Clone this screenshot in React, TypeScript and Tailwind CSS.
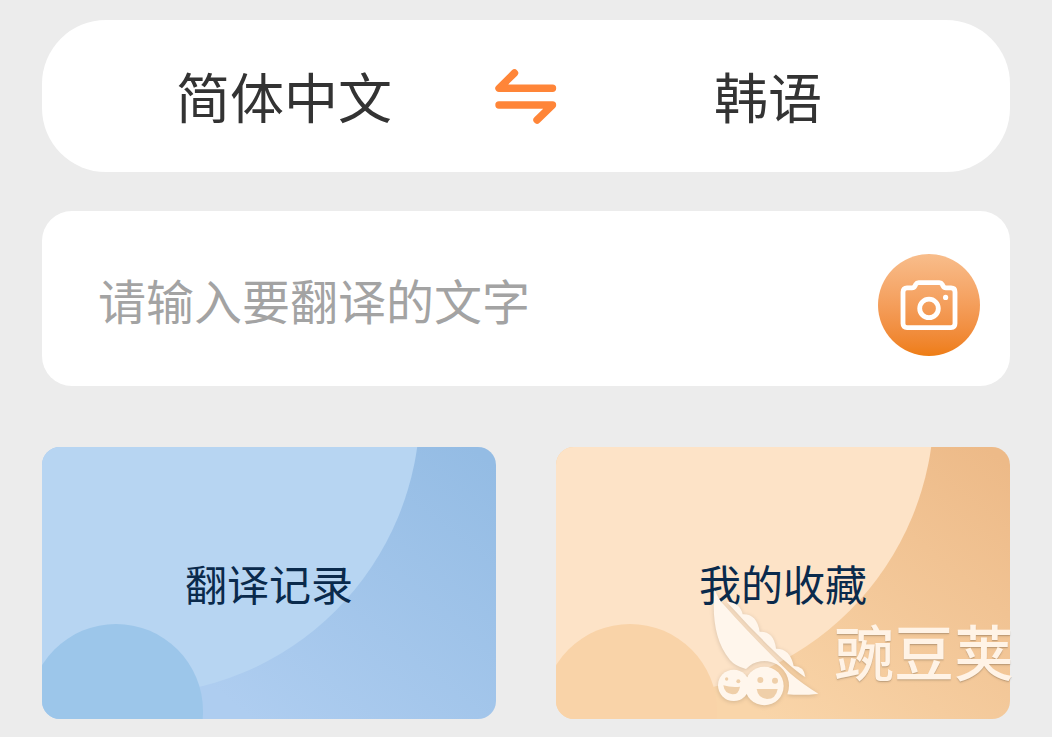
import { useState } from "react";

interface CardArtProps {
  id: string;
  from: string;
  to: string;
  big: string;
  small: string;
}

interface ShortcutCardProps extends CardArtProps {
  label: string;
}

function SwapIcon() {
  return (
    <svg
      viewBox="0 0 62 56"
      className="w-[62px] h-14"
      fill="none"
      stroke="#ff8538"
      strokeWidth="7.4"
      strokeLinecap="round"
      strokeLinejoin="round"
      aria-hidden="true"
    >
      <path d="M19.5 5 L4 20.3 H57.5" />
      <path d="M4 37 H57.5 L42 52" />
    </svg>
  );
}

function CameraIcon() {
  return (
    <svg
      viewBox="0 0 58 52"
      className="w-[58px] h-[52px]"
      fill="none"
      stroke="#fff"
      strokeWidth="4.8"
      strokeLinejoin="round"
      aria-hidden="true"
    >
      <path d="M7 8.9 H12 Q14 8.9 15 6.9 L15.7 5.4 Q16.7 3.7 18.7 3.7 H39.3 Q41.3 3.7 42.3 5.4 L43 6.9 Q44 8.9 46 8.9 H51 Q55 8.9 55 12.9 V44.6 Q55 48.6 51 48.6 H7 Q3 48.6 3 44.6 V12.9 Q3 8.9 7 8.9 Z" />
      <circle cx="29" cy="29.4" r="9.3" />
      <circle cx="45.6" cy="18.4" r="2.6" fill="#fff" stroke="none" />
    </svg>
  );
}

// Círculos decorativos no fundo dos cards
function CardArt({ id, from, to, big, small }: CardArtProps) {
  return (
    <svg
      viewBox="0 0 454 272"
      preserveAspectRatio="xMidYMid slice"
      className="absolute inset-0 w-full h-full"
      aria-hidden="true"
    >
      <defs>
        <linearGradient id={id} gradientUnits="userSpaceOnUse" x1="430" y1="0" x2="210" y2="272">
          <stop offset="0" stopColor={from} />
          <stop offset="1" stopColor={to} />
        </linearGradient>
      </defs>
      <rect width="454" height="272" fill={`url(#${id})`} />
      <circle cx="90" cy="-40" r="288" fill={big} />
      <circle cx="74" cy="264" r="87" fill={small} />
    </svg>
  );
}

function ShortcutCard({ label, ...art }: ShortcutCardProps) {
  return (
    <button
      type="button"
      className="relative overflow-hidden rounded-[18px] h-[272px] flex items-center justify-center cursor-pointer"
    >
      <CardArt {...art} />
      <span className="relative text-[42px] leading-[60px] text-[#0a2a4c]">{label}</span>
    </button>
  );
}

function PeaPod() {
  return (
    <svg viewBox="0 0 390 390" className="w-[130px] h-[130px] shrink-0 drop-shadow-sm" aria-hidden="true">
      <g fill="#fff6ec">
        <path d="M44 14 C36 90 44 170 90 225 Q106 244 138 252 A74 74 0 0 1 262 328 Q310 332 355 326 C325 308 296 288 270 265 Q160 160 70 58 Q56 44 44 14 Z" />
        <path d="M80 50 Q120 52 128 88 Q170 86 179 140 Q222 138 228 191 Q270 190 281 243 Q312 243 316 276 Q300 268 240 215 Q160 140 80 50 Z" />
        <circle cx="101" cy="301" r="47" />
        <circle cx="193" cy="303" r="58" />
      </g>
      <g fill="#efcfa9">
        <circle cx="80" cy="282" r="5" />
        <circle cx="115" cy="289" r="6" />
        <circle cx="181" cy="285" r="9" />
        <circle cx="225" cy="287" r="9" />
        <path d="M70 301 Q94 308 120 305 Q116 329 97 328 Q73 325 70 301 Z" />
        <path d="M170 312 H233 Q228 342 201 342 Q174 340 170 312 Z" />
      </g>
    </svg>
  );
}

export default function App() {
  const [langs, setLangs] = useState(["简体中文", "韩语"]);
  const [texto, setTexto] = useState("");

  return (
    <main className="min-h-screen bg-[#ececec] px-[42px] pt-5 pb-[18px] font-['Noto_Sans_CJK_SC',sans-serif] overflow-x-hidden">
      {/* Seletor de idiomas */}
      <section className="grid grid-cols-[1fr_62px_1fr] items-center h-[152px] px-[31px] bg-white rounded-[64px] text-[54px] leading-[80px] text-[#333]">
        <button type="button" className="cursor-pointer">{langs[0]}</button>
        <button
          type="button"
          aria-label="交换语言"
          className="cursor-pointer"
          onClick={() => setLangs([langs[1], langs[0]])}
        >
          <SwapIcon />
        </button>
        <button type="button" className="cursor-pointer">{langs[1]}</button>
      </section>

      {/* Campo de texto + câmera */}
      <section className="mt-[39px] flex items-center h-[175px] pl-[56px] pr-[30px] bg-white rounded-[30px]">
        <input
          type="text"
          aria-label="请输入要翻译的文字"
          placeholder="请输入要翻译的文字"
          value={texto}
          onChange={(e) => setTexto(e.target.value)}
          className="flex-1 min-w-0 h-20 text-5xl text-[#333] placeholder:text-[#a3a3a3] outline-none"
        />
        <button
          type="button"
          aria-label="拍照翻译"
          className="mt-3 size-[102px] shrink-0 rounded-full flex items-center justify-center bg-linear-to-b from-[#f8bd8b] to-[#ee7d12] cursor-pointer"
        >
          <CameraIcon />
        </button>
      </section>

      {/* Atalhos */}
      <section className="relative mt-[61px] grid grid-cols-2 gap-[60px]">
        <ShortcutCard id="blue" label="翻译记录" from="#94bce4" to="#aecdf0" big="#b7d5f2" small="#9cc6ea" />
        <ShortcutCard id="orange" label="我的收藏" from="#edba88" to="#f9d5a9" big="#fde3c7" small="#f9d3a8" />

        <div className="absolute -right-1 bottom-1 flex items-center gap-1 pointer-events-none">
          <PeaPod />
          <span className="text-6xl font-medium text-[#fff3e6] text-shadow-sm">豌豆荚</span>
        </div>
      </section>
    </main>
  );
}
